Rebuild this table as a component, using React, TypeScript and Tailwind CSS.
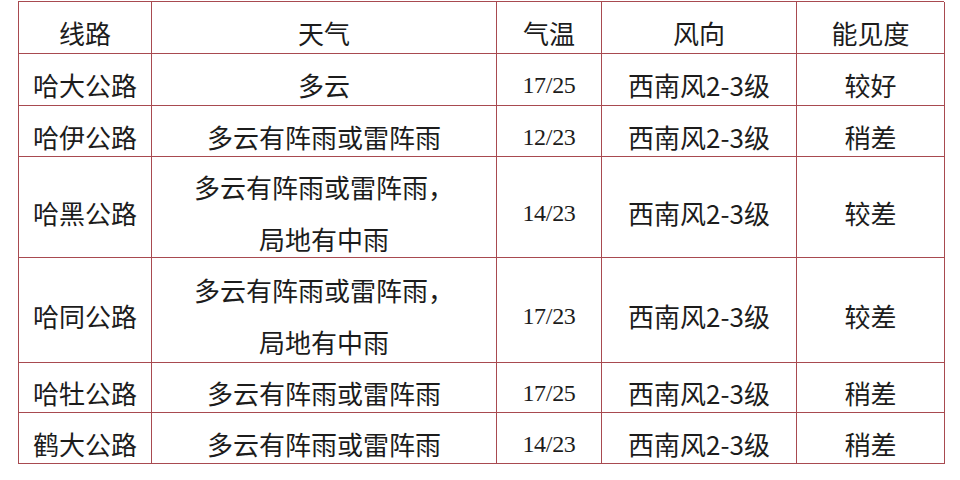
const rows: { route: string; weather: string[]; temp: string; wind: string; vis: string }[] = [
  { route: "哈大公路", weather: ["多云"], temp: "17/25", wind: "西南风2-3级", vis: "较好" },
  { route: "哈伊公路", weather: ["多云有阵雨或雷阵雨"], temp: "12/23", wind: "西南风2-3级", vis: "稍差" },
  { route: "哈黑公路", weather: ["多云有阵雨或雷阵雨，", "局地有中雨"], temp: "14/23", wind: "西南风2-3级", vis: "较差" },
  { route: "哈同公路", weather: ["多云有阵雨或雷阵雨，", "局地有中雨"], temp: "17/23", wind: "西南风2-3级", vis: "较差" },
  { route: "哈牡公路", weather: ["多云有阵雨或雷阵雨"], temp: "17/25", wind: "西南风2-3级", vis: "稍差" },
  { route: "鹤大公路", weather: ["多云有阵雨或雷阵雨"], temp: "14/23", wind: "西南风2-3级", vis: "稍差" },
];

const cell =
  "flex flex-col items-center justify-center pt-[11px] border-r-[1.5px] border-b-[1.5px] border-[#a84a50]";

export default function App() {
  return (
    <div
      className="w-[960px] h-[480px] bg-white overflow-hidden pt-[1px] pl-[18px] text-[#1c1c1c]"
      style={{ fontFamily: '"Noto Sans CJK SC", "Noto Sans", sans-serif' }}
    >
      <div className="grid w-[926px] grid-cols-[133px_345px_105px_195px_148px] grid-rows-[52px_52px_51px_101px_105px_50px_51px] border-t-[1.5px] border-l-[1.5px] border-[#a84a50] text-[26px] leading-[30px]">
        {/* header */}
        <div className={cell}>线路</div>
        <div className={cell}>天气</div>
        <div className={cell}>气温</div>
        <div className={cell}>风向</div>
        <div className={cell}>能见度</div>

        {rows.map((r) => (
          <div key={r.route} className="contents">
            <div className={cell}>{r.route}</div>
            <div className={cell + " leading-[52px]"}>
              {r.weather.map((w) => (
                <span key={w}>{w}</span>
              ))}
            </div>
            <div className={cell + " font-['Liberation_Serif',serif] text-[24px] tracking-[-0.3px]"}>{r.temp}</div>
            <div className={cell}>{r.wind}</div>
            <div className={cell}>{r.vis}</div>
          </div>
        ))}
      </div>
    </div>
  );
}
